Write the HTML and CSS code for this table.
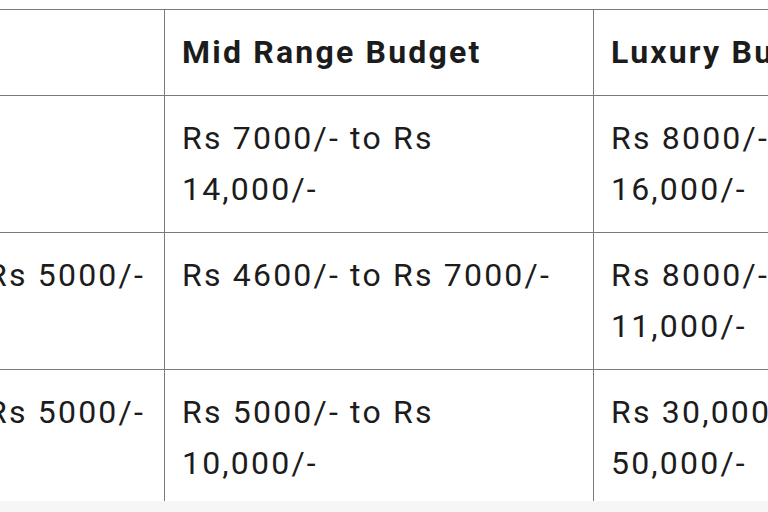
FILE: index.html
```html
<!DOCTYPE html>
<html>
<head>
<meta charset="utf-8">
<link rel="stylesheet" href="styles.css">
</head>
<body>
<div class="page">
  <table class="budget">
    <colgroup>
      <col class="c1"><col class="c2"><col class="c3">
    </colgroup>
    <thead>
      <tr><th class="first"></th><th>Mid Range Budget</th><th>Luxury Budget</th></tr>
    </thead>
    <tbody>
      <tr><td class="first"></td><td>Rs 7000/- to Rs 14,000/-</td><td>Rs 8000/- to Rs 16,000/-</td></tr>
      <tr><td class="first">Rs 5000/-</td><td>Rs 4600/- to Rs 7000/-</td><td>Rs 8000/- to Rs 11,000/-</td></tr>
      <tr><td class="first">Rs 5000/-</td><td>Rs 5000/- to Rs 10,000/-</td><td>Rs 30,000/- to Rs 50,000/-</td></tr>
    </tbody>
  </table>
</div>
</body>
</html>
```
FILE: styles.css
```css
html, body {
  margin: 0;
  padding: 0;
  background: #f6f6f6;
}
.page {
  height: 501px;
  padding-top: 9px;
  box-sizing: border-box;
  background: #ffffff;
  overflow: hidden;
}
.budget {
  border-collapse: collapse;
  table-layout: fixed;
  width: 1053px;
  margin-left: -31px;
  font-family: Roboto, "Noto Sans", sans-serif;
  font-size: 32px;
  line-height: 51px;
  letter-spacing: 2.2px;
  color: #1c1c1c;
}
.c1 { width: 195px; }
.c2 { width: 429px; }
.c3 { width: 429px; }
.budget th,
.budget td {
  border: 1px solid #7a7a7a;
  padding: 17px;
  text-align: left;
  vertical-align: top;
}
.budget .first {
  white-space: nowrap;
  overflow: hidden;
}
.budget th {
  font-weight: 700;
}
```
